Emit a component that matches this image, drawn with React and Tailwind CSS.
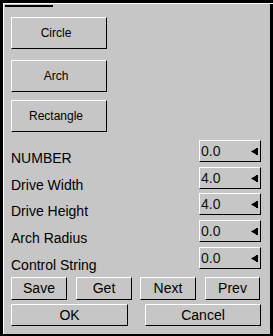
import React from "react";

const raised = "border-t border-l border-t-white border-l-white border-b border-r border-b-black border-r-black";

function ShapeButton({ label, className }) {
	return (
		<div className={`w-[96px] h-[32px] ${raised} flex items-center justify-center pr-[6px] text-[12px] leading-[14px] ${className}`}>
			{label}
		</div>
	);
}

function Field({ label, value }) {
	return (
		<div className="flex items-start h-[22px]">
			<div className="flex-1 pt-[10px] text-[14px] leading-[16px]">{label}</div>
			<div className={`w-[62px] h-[22px] ${raised} flex items-start pt-[2px] pl-px text-[14px] leading-[16px] text-[#111]`}>
				<span className="flex-1">{value}</span>
				{/* little left-pointing arrow */}
				<svg width="7" height="7" viewBox="0 0 7 7" className="mt-[5px] mr-[2px]">
					<polygon points="6,0 0,3.5 6,7" fill="#000" />
					<rect x="5" y="0" width="2" height="7" fill="#000" />
				</svg>
			</div>
		</div>
	);
}

export default function App() {
	const fields = [
		["NUMBER", "0.0"],
		["Drive Width", "4.0"],
		["Drive Height", "4.0"],
		["Arch Radius", "0.0"],
		["Control String", "0.0"],
	];

	return (
		<div
			className="w-[273px] h-[336px] bg-black overflow-hidden pt-[3px] pl-[3px] text-black"
			style={{ fontFamily: '"Liberation Sans", Arial, sans-serif' }}
		>
			<div className="h-px w-[270px] bg-white" />
			<div className="w-[267px] h-[330px] bg-[#c6c6c6] border-l border-l-white flex flex-col pl-[7px] pr-[9px]">
				{/* top rule */}
				<div className="-ml-[6px] mt-px h-[2px] w-[48px] bg-black" />

				<ShapeButton label="Circle" className="mt-[10px]" />
				<ShapeButton label="Arch" className="mt-[11px]" />
				<ShapeButton label="Rectangle" className="mt-[8px]" />

				<div className="mt-[8px] flex flex-col gap-y-[4.67px]">
					{fields.map(([l, v]) => (
						<Field key={l} label={l} value={v} />
					))}
				</div>

				<div className="mt-[8px] flex text-[14px] leading-[16px]">
					<div className={`w-[56px] h-[23px] ${raised} flex items-center justify-center`}>Save</div>
					<div className={`ml-[9px] w-[56px] h-[23px] ${raised} flex items-center justify-center`}>Get</div>
					<div className={`ml-[8px] w-[56px] h-[23px] ${raised} flex items-center justify-center`}>Next</div>
					<div className={`ml-[9px] w-[55px] h-[23px] ${raised} flex items-center justify-center`}>Prev</div>
				</div>

				<div className="mt-[4px] flex text-[14px] leading-[16px]">
					<div className={`w-[118px] h-[22px] ${raised} flex items-center justify-center`}>OK</div>
					<div className={`ml-[17px] w-[117px] h-[22px] ${raised} flex items-center justify-center`}>Cancel</div>
				</div>
			</div>
		</div>
	);
}
